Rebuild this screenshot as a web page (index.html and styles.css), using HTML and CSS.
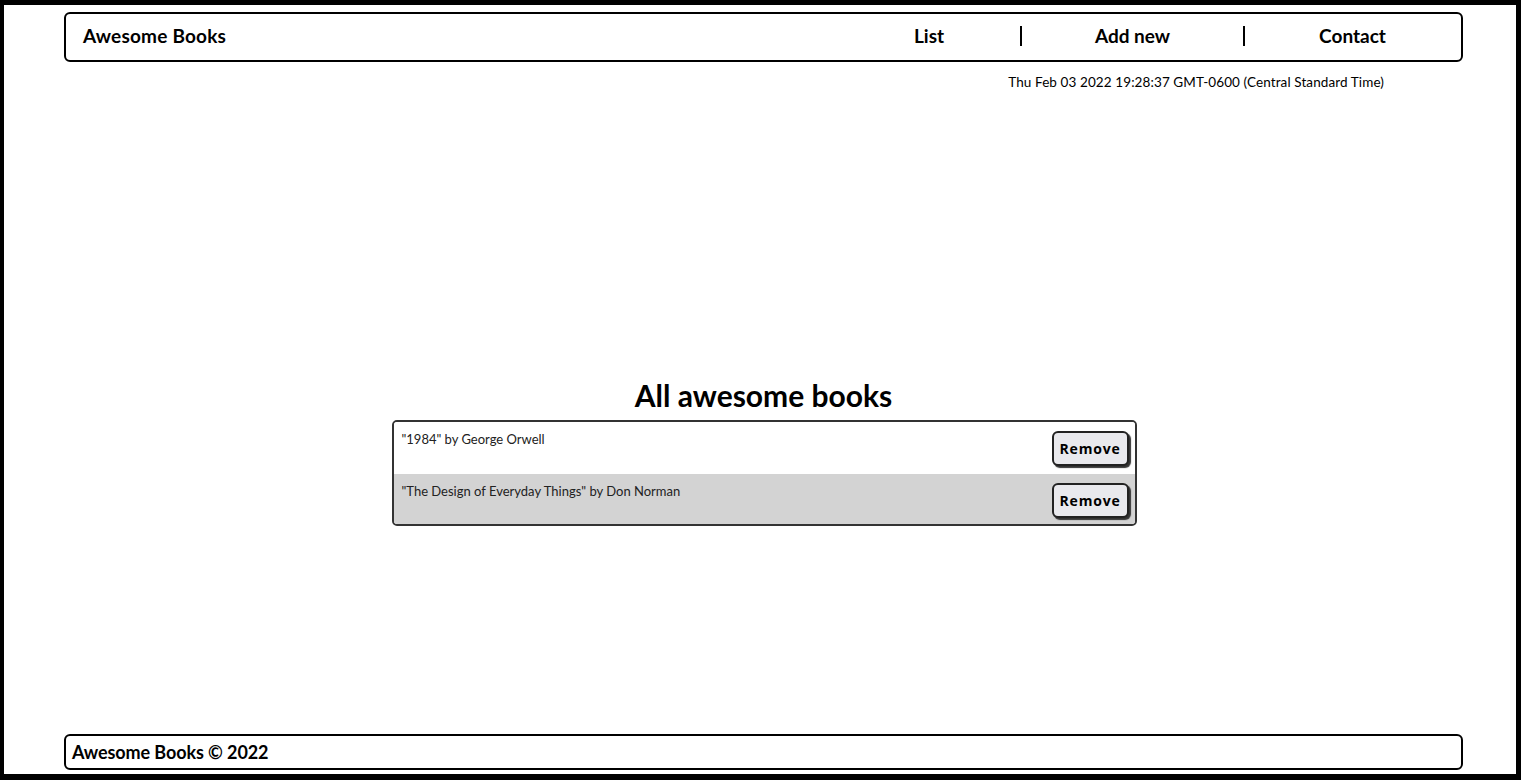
FILE: index.html
```html
<!DOCTYPE html>
<html lang="en">
<head>
<meta charset="utf-8">
<title>Awesome Books</title>
<link rel="stylesheet" href="styles.css">
</head>
<body>
<div class="page">
  <header class="topbar">
    <h1 class="brand">Awesome Books</h1>
    <nav>
      <ul class="nav">
        <li class="nav-item nav-list">List</li>
        <li class="nav-item nav-add">Add new</li>
        <li class="nav-item nav-contact">Contact</li>
      </ul>
    </nav>
  </header>
  <p class="date">Thu Feb 03 2022 19:28:37 GMT-0600 (Central Standard Time)</p>
  <main class="content">
    <h2 class="title">All awesome books</h2>
    <ul class="books">
      <li class="book">
        <p class="book-text">"1984" by George Orwell</p>
        <button class="remove">Remove</button>
      </li>
      <li class="book book-alt">
        <p class="book-text">"The Design of Everyday Things" by Don Norman</p>
        <button class="remove">Remove</button>
      </li>
    </ul>
  </main>
  <footer class="footer">
    <p class="copy">Awesome Books © 2022</p>
  </footer>
</div>
</body>
</html>
```

FILE: styles.css
```css
* { box-sizing: border-box; }

html, body {
  margin: 0;
  padding: 0;
  background: #fff;
}

body {
  font-family: "Lato", "Noto Sans", sans-serif;
  color: #000;
}

.page {
  height: 780px;
  border-style: solid;
  border-color: #000;
  border-width: 5px 5px 6px 4px;
  display: flex;
  flex-direction: column;
  padding: 0 53px 0 60px;
}

.topbar {
  margin-top: 7px;
  height: 50px;
  border: 2px solid #000;
  border-radius: 6px;
  display: flex;
  align-items: center;
  justify-content: space-between;
  padding: 0 1px 3px 17px;
}

.brand {
  margin: 0;
  font-size: 19px;
  font-weight: 700;
  letter-spacing: 0.2px;
}

.nav {
  list-style: none;
  margin: 0;
  padding: 0;
  display: flex;
  align-items: center;
}

.nav-item {
  font-size: 19px;
  font-weight: 700;
  text-align: center;
  line-height: 20px;
}

.nav-list { width: 182px; }
.nav-add { width: 223px; border-left: 2px solid #000; }
.nav-contact { width: 217px; border-left: 2px solid #000; }

.date {
  margin: 12px 79px 0 0;
  text-align: right;
  font-size: 13.5px;
  letter-spacing: 0.1px;
}

.content {
  flex: 1;
  display: flex;
  flex-direction: column;
  align-items: center;
  padding-top: 289px;
}

.title {
  margin: 0 0 9px;
  font-size: 30px;
  font-weight: 700;
  line-height: 32px;
  letter-spacing: 0;
}

.books {
  list-style: none;
  margin: 0 0 0 1px;
  padding: 0;
  width: 745px;
  border: 2px solid #333;
  border-radius: 5px;
  overflow: hidden;
}

.book {
  display: flex;
  justify-content: space-between;
  align-items: flex-start;
  height: 52px;
  padding: 9px 6px 0 8px;
  background: #fff;
}

.book-alt {
  background: #d3d3d3;
  height: 50px;
}

.book-text {
  margin: 0;
  font-size: 13px;
  color: #222;
}

.remove {
  width: 77px;
  height: 35px;
  border: 2px solid #222;
  border-radius: 6px;
  background: #e9e9ed;
  box-shadow: 2px 2px 1px #333;
  font-family: "Open Sans", sans-serif;
  font-weight: 700;
  font-size: 14px;
  letter-spacing: 0.8px;
  color: #000;
  padding: 0;
}

.footer {
  margin-bottom: 4px;
  height: 36px;
  border: 2px solid #000;
  border-radius: 6px;
  display: flex;
  align-items: center;
  padding: 0 6px;
}

.copy {
  margin: 0;
  font-size: 18px;
  font-weight: 700;
  letter-spacing: -0.1px;
}
```
